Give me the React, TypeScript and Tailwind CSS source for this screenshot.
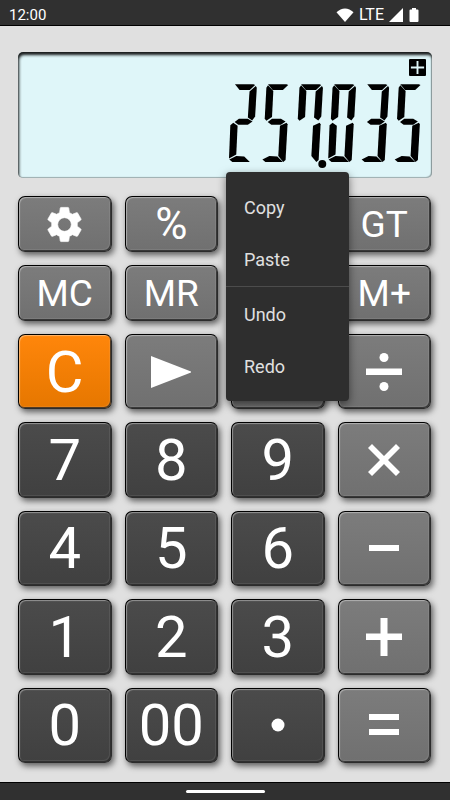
import type { ReactNode } from "react";

type Tone = "gray" | "dark" | "orange";

type KeyDef = {
  id: string;
  tone: Tone;
  label: string;
  face?: ReactNode;
  size?: string;
};

const TONES: Record<Tone, string> = {
  gray: "bg-linear-to-b from-[#7c7c7c] to-[#707070]",
  dark: "bg-linear-to-b from-[#4b4b4b] to-[#404040]",
  orange: "bg-linear-to-b from-[#ff860b] to-[#e67700]",
};

// Segment outlines of one digit, already slanted.
const SEGMENTS: Record<string, string> = {
  a: "18,1 74,1 79,3 63,18 32,18",
  b: "81,6 84,11 79,98 70,110 57,101 62,23",
  c: "74,117 77,122 71,230 64,236 49,218 54,126",
  d: "1,228 22,218 46,219 63,236 10,236",
  e: "13,117 26,126 22,213 0,225 4,125",
  f: "18,4 34,21 30,100 13,111 8,105 13,11",
  g: "17,115 30,105 57,105 71,113 57,123 28,123",
};

const DIGITS: Record<string, string> = {
  "0": "abcdef",
  "1": "bc",
  "2": "abged",
  "3": "abgcd",
  "4": "fgbc",
  "5": "afgcd",
  "6": "afgecd",
  "7": "fabc",
  "8": "abcdefg",
  "9": "abcdfg",
};

function SegmentDisplay({ value }: { value: string }) {
  const digits = value.replace(".", "").split("");
  const dotAt = value.indexOf(".");

  return (
    <svg viewBox="0 0 588 260" className="h-[86px]" role="img" aria-label={value}>
      {digits.map((digit, i) => (
        <g key={i} transform={`translate(${i * 100} 0)`}>
          {DIGITS[digit].split("").map((s) => (
            <polygon key={s} points={SEGMENTS[s]} />
          ))}
        </g>
      ))}
      {dotAt > 0 ? <circle cx={dotAt * 100 - 18} cy="242" r="12" /> : null}
    </svg>
  );
}

function Gear() {
  return (
    <svg viewBox="0 0 24 24" className="size-[41px] fill-white stroke-white" strokeWidth="0.4" aria-hidden>
      <path d="M19.43 12.98c.04-.32.07-.64.07-.98s-.03-.66-.07-.98l2.11-1.65c.19-.15.24-.42.12-.64l-2-3.46c-.12-.22-.39-.3-.61-.22l-2.49 1c-.52-.4-1.08-.73-1.69-.98l-.38-2.65C14.46 2.18 14.25 2 14 2h-4c-.25 0-.46.18-.49.42l-.38 2.65c-.61.25-1.17.59-1.69.98l-2.49-1c-.23-.09-.49 0-.61.22l-2 3.46c-.13.22-.07.49.12.64l2.11 1.65c-.04.32-.07.65-.07.98s.03.66.07.98l-2.11 1.65c-.19.15-.24.42-.12.64l2 3.46c.12.22.39.3.61.22l2.49-1c.52.4 1.08.73 1.69.98l.38 2.65c.03.24.24.42.49.42h4c.25 0 .46-.18.49-.42l.38-2.65c.61-.25 1.17-.59 1.69-.98l2.49 1c.23.09.49 0 .61-.22l2-3.46c.12-.22.07-.49-.12-.64l-2.11-1.65zM12 16a4 4 0 1 1 0-8 4 4 0 0 1 0 8z" />
    </svg>
  );
}

function Sign({ children }: { children: ReactNode }) {
  return (
    <svg viewBox="0 0 40 40" className="size-10 fill-white" aria-hidden>
      {children}
    </svg>
  );
}

const SMALL = "text-[37px]";

const KEYS: KeyDef[] = [
  { id: "settings", tone: "gray", label: "Settings", face: <Gear /> },
  { id: "percent", tone: "gray", label: "%", size: "text-[44px]" },
  { id: "tax", tone: "gray", label: "Tax", face: <span /> },
  { id: "gt", tone: "gray", label: "GT", size: SMALL },
  { id: "mc", tone: "gray", label: "MC", size: SMALL },
  { id: "mr", tone: "gray", label: "MR", size: SMALL },
  { id: "mminus", tone: "gray", label: "Memory minus", face: <span /> },
  { id: "mplus", tone: "gray", label: "M+", size: SMALL },
  { id: "clear", tone: "orange", label: "C" },
  { id: "shift", tone: "gray", label: "Backspace", face: <Sign><path d="M0 4v32L41 20z" /></Sign> },
  { id: "root", tone: "gray", label: "Root", face: <span /> },
  {
    id: "divide",
    tone: "gray",
    label: "Divide",
    face: (
      <Sign>
        <circle cx="20" cy="5.5" r="4.5" />
        <path d="M2 16.5h36v6.5H2z" />
        <circle cx="20" cy="34.5" r="4.5" />
      </Sign>
    ),
  },
  { id: "7", tone: "dark", label: "7" },
  { id: "8", tone: "dark", label: "8" },
  { id: "9", tone: "dark", label: "9" },
  {
    id: "multiply",
    tone: "gray",
    label: "Multiply",
    face: (
      <Sign>
        <path d="M4 8 8 4 20 16 32 4 36 8 24 20 36 32 32 36 20 24 8 36 4 32 16 20z" />
      </Sign>
    ),
  },
  { id: "4", tone: "dark", label: "4" },
  { id: "5", tone: "dark", label: "5" },
  { id: "6", tone: "dark", label: "6" },
  { id: "subtract", tone: "gray", label: "Subtract", face: <Sign><path d="M5 17h30v6H5z" /></Sign> },
  { id: "1", tone: "dark", label: "1" },
  { id: "2", tone: "dark", label: "2" },
  { id: "3", tone: "dark", label: "3" },
  {
    id: "add",
    tone: "gray",
    label: "Add",
    face: <Sign><path d="M2 16.5h14.5V1h7v15.5H38V23H23.5v16h-7V23H2z" /></Sign>,
  },
  { id: "0", tone: "dark", label: "0" },
  { id: "00", tone: "dark", label: "00" },
  { id: "dot", tone: "dark", label: "Decimal point", face: <Sign><circle cx="20" cy="20" r="6.5" /></Sign> },
  { id: "equals", tone: "gray", label: "Equals", face: <Sign><path d="M5 9h30v6H5zM5 24h30v6H5z" /></Sign> },
];

function Key({ def }: { def: KeyDef }) {
  return (
    <button
      type="button"
      aria-label={def.face ? def.label : undefined}
      className={`${TONES[def.tone]} ${
        def.size ?? "text-[58px]"
      } flex min-h-0 items-center justify-center rounded-[7px] border border-black border-r-[#2c2c2c] border-b-[#2c2c2c] leading-none text-white shadow-[2px_3px_6px_rgba(0,0,0,0.6),inset_-1px_-1px_0_rgba(40,40,40,0.8),inset_1px_1px_1px_rgba(255,255,255,0.4),inset_-2px_-2px_0_rgba(255,255,255,0.08)]`}
    >
      {def.face ?? def.label}
    </button>
  );
}

function StatusBar() {
  return (
    <header className="flex h-[26px] items-center justify-between border-b border-black bg-[#303030] pr-[30px] pl-[9px] text-white">
      <span className="pt-1 text-[15px] leading-5">12:00</span>
      <div className="flex items-center gap-[5px] pt-1">
        <svg viewBox="0 0 18 14" className="h-[14px] w-[18px] fill-white" aria-hidden>
          <path d="M.5 4.3C5.5-.8 12.5-.8 17.5 4.3L9 14z" />
        </svg>
        <span className="text-[16px] leading-5">LTE</span>
        <svg viewBox="0 0 14 14" className="size-[14px] fill-white" aria-hidden>
          <path d="M14 0v14H0z" />
        </svg>
        <svg viewBox="0 0 12 16" className="h-4 w-3 fill-white" aria-hidden>
          <path d="M4 1h4v1.500h1.500q1 0 1 1V14q0 1-1 1h-7q-1 0-1-1V3.500q0-1 1-1H4z" />
        </svg>
      </div>
    </header>
  );
}

function ContextMenu() {
  const item = "block h-[52px] w-full pl-[18px] text-left text-[18px] leading-[52px]";
  return (
    <div
      role="menu"
      className="absolute top-[120px] right-[83px] z-10 w-[123px] rounded-[4px] bg-[#2e2e2e] pt-[10px] pb-2 text-[#e0e0e0] shadow-[0_3px_8px_rgba(0,0,0,0.5)]"
    >
      <button type="button" role="menuitem" className={item}>Copy</button>
      <button type="button" role="menuitem" className={item}>Paste</button>
      <hr className="mb-[2px] border-[#4c4c4c]" />
      <button type="button" role="menuitem" className={item}>Undo</button>
      <button type="button" role="menuitem" className={item}>Redo</button>
    </div>
  );
}

export default function App() {
  return (
    <div className="flex min-h-screen flex-col bg-[#e0e0e0] font-[Roboto,sans-serif]">
      <StatusBar />
      <main className="flex flex-1 flex-col gap-[18px] px-[18px] pt-[26px] pb-[19px]">
        <section className="relative flex h-[126px] flex-col items-end rounded-[5px] bg-[#dff6f9] pt-[7px] pr-[6px] shadow-[inset_1px_3px_3px_rgba(0,0,0,0.9),inset_-1px_-1px_1px_rgba(0,0,0,0.3)]">
          <svg viewBox="0 0 18 18" className="h-[17px] w-[17px]" aria-hidden>
            <rect width="18" height="18" rx="1" />
            <path d="M9 2v14M2 9h14" stroke="#dff6f9" strokeWidth="2" />
          </svg>
          <div className="pt-2 pr-[3px]">
            <SegmentDisplay value="257.035" />
          </div>
          <ContextMenu />
        </section>
        <div className="grid flex-1 grid-cols-4 grid-rows-[56px_56px_repeat(5,minmax(0,1fr))] gap-[13px] pr-px">
          {KEYS.map((k) => (
            <Key key={k.id} def={k} />
          ))}
        </div>
      </main>
      <footer className="flex h-[18px] items-center justify-center border-t border-black bg-[#303030]">
        <div className="h-[3px] w-[79px] rounded-full bg-white" />
      </footer>
    </div>
  );
}
